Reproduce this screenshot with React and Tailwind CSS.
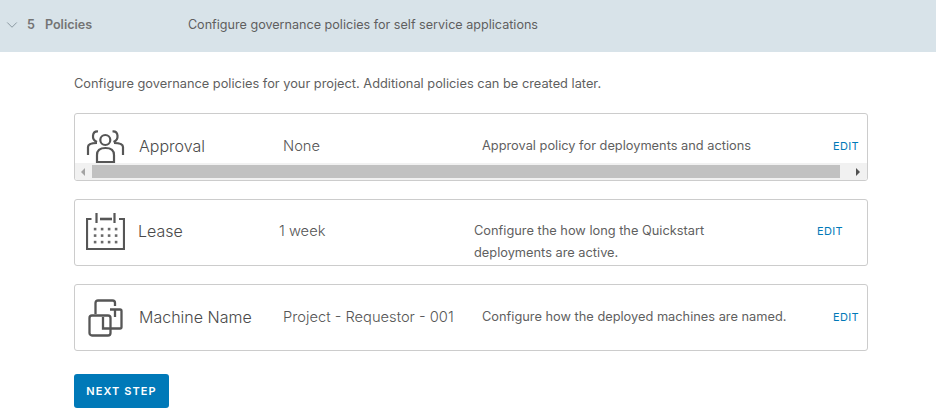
import React from "react";
import { ChevronDown } from "lucide-react";

const font = "font-['Inter','Noto_Sans',sans-serif]";

const UsersIcon = () => (
  <svg className="mr-[4px]" width="39" height="38" viewBox="0 -1 39 38" fill="none" stroke="#565656" strokeWidth="2.2">
    <circle cx="19.3" cy="11" r="5" />
    <path d="M12 2.5 C6 2 5 10.5 11 13" />
    <path d="M26.5 2.5 C32.5 2 33.5 10.5 27.5 13" />
    <path d="M2 26 V18 C2 15 5 14 11 14" />
    <path d="M37 26 V18 C37 15 34 14 28 14" />
    <path d="M11 33 V26 C11 21 15 19 19.5 19 C24 19 28 21 28 26 V33 Z" />
  </svg>
);

const CalendarIcon = () => (
  <svg className="mr-[2px]" width="39" height="37" viewBox="0 0 39 37" fill="none" stroke="#565656" strokeWidth="2.2">
    <path d="M5.5 6 H1 V36 H38 V6 H33" />
    <path d="M14 6 H26" strokeWidth="2.6" />
    <path d="M10.5 0 V10 M28.5 0 V10" />
    <g fill="#6a6a6a" stroke="none">
      {[16, 22.5, 29].map((y) =>
        [9, 16, 23, 30].map((x) => <rect key={`${x}-${y}`} x={x - 1.2} y={y - 1.2} width="2.6" height="2.6" />)
      )}
    </g>
  </svg>
);

const CloneIcon = () => (
  <svg className="mr-[4px]" width="35" height="38" viewBox="0 0 35 38" fill="none" stroke="#565656" strokeWidth="2.3">
    <path d="M7.5 15 V4 C7.5 2.5 8.5 1.5 10 1.5 H24.5 C26 1.5 27 2.5 27 4 V7" />
    <path d="M22 10.5 H32 C33 10.5 33.5 11 33.5 12 V28 C33.5 29 33 29.5 32 29.5 H22" />
    <path d="M27 10.5 V18" />
    <rect x="1.5" y="16.5" width="21" height="20" rx="2.5" />
    <path d="M15 18 V29.5 H22" />
  </svg>
);

const Row = ({ icon, title, value, desc, cols }) => (
  <div className={`grid items-start ${cols}`}>
    <div className="flex justify-center">{icon}</div>
    <div className="mt-[6px] text-[16px] leading-[24px] font-light text-[#4a4a4a]">{title}</div>
    <div className="mt-[7px] text-[14.7px] leading-[22px] font-light text-[#565656]">{value}</div>
    <div className="mt-[7px] text-[12.8px] leading-[22px] text-[#5f5f5f]">{desc}</div>
    <div className="mt-[7px] text-[11px] leading-[22px] tracking-[0.3px] text-[#0079b8]">EDIT</div>
  </div>
);

export default function App() {
  return (
    <div className={`h-[419px] w-[936px] overflow-hidden bg-white ${font}`}>
      <div className="flex h-[52px] items-center bg-[#d8e3e9] pb-[2px]">
        <ChevronDown size={18} strokeWidth={1} className="ml-[3px] text-[#6f7f88]" />
        <span className="ml-[6px] text-[12.6px] font-semibold text-[#747474]">5</span>
        <span className="ml-[10px] w-[143px] text-[12.6px] font-semibold text-[#747474]">Policies</span>
        <span className="text-[12.6px] text-[#5f5f5f]">Configure governance policies for self service applications</span>
      </div>

      <div className="ml-[74px] w-[794px]">
        <p className="mt-[23px] text-[12.8px] leading-[18px] text-[#5f5f5f]">
          Configure governance policies for your project. Additional policies can be created later.
        </p>

        <div className="mt-[20px] flex h-[68px] flex-col overflow-hidden rounded-[3px] border border-[#cccccc]">
          <div className="h-[49px] overflow-hidden pt-[14px]">
            <Row
              cols="grid-cols-[64px_144px_199px_351px_34px]"
              icon={<UsersIcon />}
              title="Approval"
              value="None"
              desc="Approval policy for deployments and actions"
            />
          </div>
          <div className="flex h-[17px] items-center bg-[#f1f1f1]">
            <div className="flex w-[17px] justify-center pr-[1px]">
              <div className="h-0 w-0 border-y-[4px] border-r-[4px] border-y-transparent border-r-[#a3a3a3]" />
            </div>
            <div className="h-[13px] w-[748px] bg-[#c1c1c1]" />
            <div className="pl-[16px]">
              <div className="h-0 w-0 border-y-[4px] border-l-[4px] border-y-transparent border-l-[#505050]" />
            </div>
          </div>
        </div>

        <div className="mt-[18px] h-[67px] rounded-[3px] border border-[#cccccc] pt-[13px]">
          <Row
            cols="grid-cols-[63px_141px_195px_343px_34px]"
            icon={<CalendarIcon />}
            title="Lease"
            value="1 week"
            desc={<>Configure the how long the Quickstart<br />deployments are active.</>}
          />
        </div>

        <div className="mt-[18px] h-[67px] rounded-[3px] border border-[#cccccc] pt-[14px]">
          <Row
            cols="grid-cols-[64px_144px_199px_351px_34px]"
            icon={<CloneIcon />}
            title="Machine Name"
            value="Project - Requestor - 001"
            desc="Configure how the deployed machines are named."
          />
        </div>

        <button className="mt-[23px] h-[34px] w-[95px] rounded-[3px] bg-[#0079b8] text-[11px] font-semibold tracking-[1.1px] text-white">
          NEXT STEP
        </button>
      </div>
    </div>
  );
}
